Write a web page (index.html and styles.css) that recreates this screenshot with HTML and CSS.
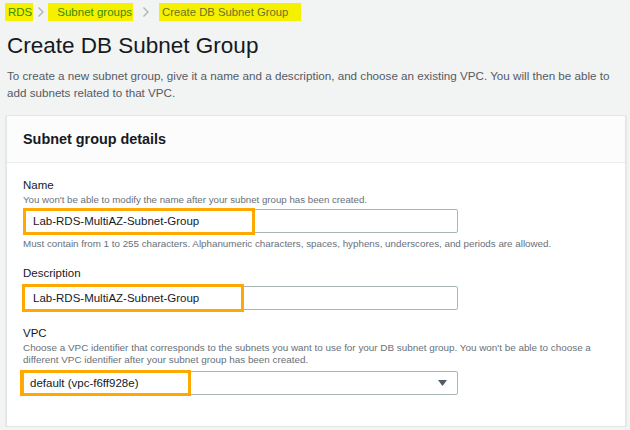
FILE: index.html
```html
<!DOCTYPE html>
<html lang="en">
<head>
<meta charset="utf-8">
<title>Create DB Subnet Group</title>
<link rel="stylesheet" href="styles.css">
</head>
<body>
<div class="page">
  <nav class="crumbs">
    <span class="crumb hl hl-rds">RDS</span>
    <svg class="chev chev-1" width="8" height="12" viewBox="0 0 8 12"><path d="M1.5 1.5 L6 6 L1.5 10.5" fill="none" stroke="#aab7b8" stroke-width="1.4"/></svg>
    <span class="crumb hl hl-groups">Subnet groups</span>
    <svg class="chev chev-2" width="8" height="12" viewBox="0 0 8 12"><path d="M1.5 1.5 L6 6 L1.5 10.5" fill="none" stroke="#aab7b8" stroke-width="1.4"/></svg>
    <span class="crumb hl current">Create DB Subnet Group</span>
  </nav>

  <h1 class="title">Create DB Subnet Group</h1>
  <p class="intro">To create a new subnet group, give it a name and a description, and choose an existing VPC. You will then be able to add subnets related to that VPC.</p>

  <section class="card">
    <header class="card-head">
      <h2>Subnet group details</h2>
    </header>
    <div class="card-body">
      <div class="field field-name">
        <div class="label">Name</div>
        <div class="help">You won't be able to modify the name after your subnet group has been created.</div>
        <div class="control ctl-name">
          <div class="input">Lab-RDS-MultiAZ-Subnet-Group</div>
          <span class="mark mark-name"></span>
        </div>
        <div class="constraint">Must contain from 1 to 255 characters. Alphanumeric characters, spaces, hyphens, underscores, and periods are allowed.</div>
      </div>

      <div class="field field-desc">
        <div class="label">Description</div>
        <div class="control ctl-desc">
          <div class="input">Lab-RDS-MultiAZ-Subnet-Group</div>
          <span class="mark mark-desc"></span>
        </div>
      </div>

      <div class="field field-vpc">
        <div class="label">VPC</div>
        <div class="help help-vpc">Choose a VPC identifier that corresponds to the subnets you want to use for your DB subnet group. You won't be able to choose a different VPC identifier after your subnet group has been created.</div>
        <div class="control ctl-vpc">
          <div class="input select">
            <span>default (vpc-f6ff928e)</span>
            <svg class="caret" width="9" height="6" viewBox="0 0 9 6"><path d="M0 0 H9 L4.5 6 Z" fill="#545b64"/></svg>
          </div>
          <span class="mark mark-vpc"></span>
        </div>
      </div>
    </div>
  </section>
</div>
</body>
</html>
```

FILE: styles.css
```css
html, body {
  margin: 0;
  padding: 0;
  background: #f2f3f3;
}
body {
  font-family: "Liberation Sans", Arial, sans-serif;
  color: #16191f;
}
.page {
  padding: 0 4px 0 6px;
}

/* breadcrumbs */
.crumbs {
  display: flex;
  align-items: center;
  height: 24px;
  font-size: 11.5px;
}
.crumb {
  display: inline-flex;
  align-items: center;
  height: 18px;
}
.hl {
  background: #f4f000;
}
.hl-rds {
  padding: 0 1px 0 3px;
  margin-left: -1px;
  color: #3a8a00;
}
.hl-groups {
  padding: 0 1px 0 9px;
  color: #3a8a00;
}
.current {
  padding: 0 13px 0 3px;
  font-size: 11.3px;
  color: #6e7224;
}
.chev-1 {
  margin: 0 3px 0 4px;
}
.chev-2 {
  margin: 0 9px 0 9px;
}

/* title */
.title {
  margin: 8px 0 0 1px;
  font-size: 22.5px;
  line-height: 28px;
  font-weight: 400;
  color: #16191f;
}
.intro {
  margin: 7px 0 0 1px;
  font-size: 11.65px;
  line-height: 17px;
  color: #545b64;
}

/* card */
.card {
  margin-top: 14px;
  background: #fff;
  border: 1px solid #e4e6e6;
  box-shadow: 0 1px 1px rgba(0, 28, 36, 0.25);
}
.card-head {
  height: 46px;
  display: flex;
  align-items: center;
  padding: 0 16px;
  border-bottom: 1px solid #eaeded;
  background: #fcfcfc;
}
.card-head h2 {
  margin: 0;
  font-size: 14.4px;
  font-weight: 700;
  color: #16191f;
}
.card-body {
  padding: 14px 16px 31px;
}

.field + .field {
  margin-top: 15px;
}
.field-vpc {
  margin-top: 16px;
}
.label {
  font-size: 11.5px;
  line-height: 16px;
  color: #16191f;
}
.help {
  font-size: 9.7px;
  line-height: 13px;
  color: #687078;
}
.help-vpc {
  font-size: 9.9px;
  line-height: 12px;
  margin-top: 1px;
  max-width: 585px;
}
.constraint {
  margin-top: 4px;
  font-size: 9.8px;
  line-height: 13px;
  color: #687078;
}

.control {
  position: relative;
  width: 435px;
  margin-top: 3px;
}
.ctl-desc {
  margin-top: 5px;
}
.ctl-vpc {
  margin-top: 5px;
}
.input {
  box-sizing: border-box;
  height: 24px;
  border: 1px solid #aab7b8;
  border-radius: 2px;
  background: #fff;
  display: flex;
  align-items: center;
  padding: 0 9px;
  font-size: 11.5px;
  color: #16191f;
}
.select {
  justify-content: space-between;
  padding: 0 10px 0 6px;
}
.caret {
  display: block;
}

/* annotation boxes */
.mark {
  position: absolute;
  box-sizing: border-box;
  border: 3px solid #ffa800;
  pointer-events: none;
}
.mark-name {
  left: 0;
  top: -1px;
  width: 232px;
  height: 27px;
}
.mark-desc {
  left: -1px;
  top: -2px;
  width: 222px;
  height: 28px;
}
.mark-vpc {
  left: -3px;
  top: -1px;
  width: 171px;
  height: 26px;
}
```
